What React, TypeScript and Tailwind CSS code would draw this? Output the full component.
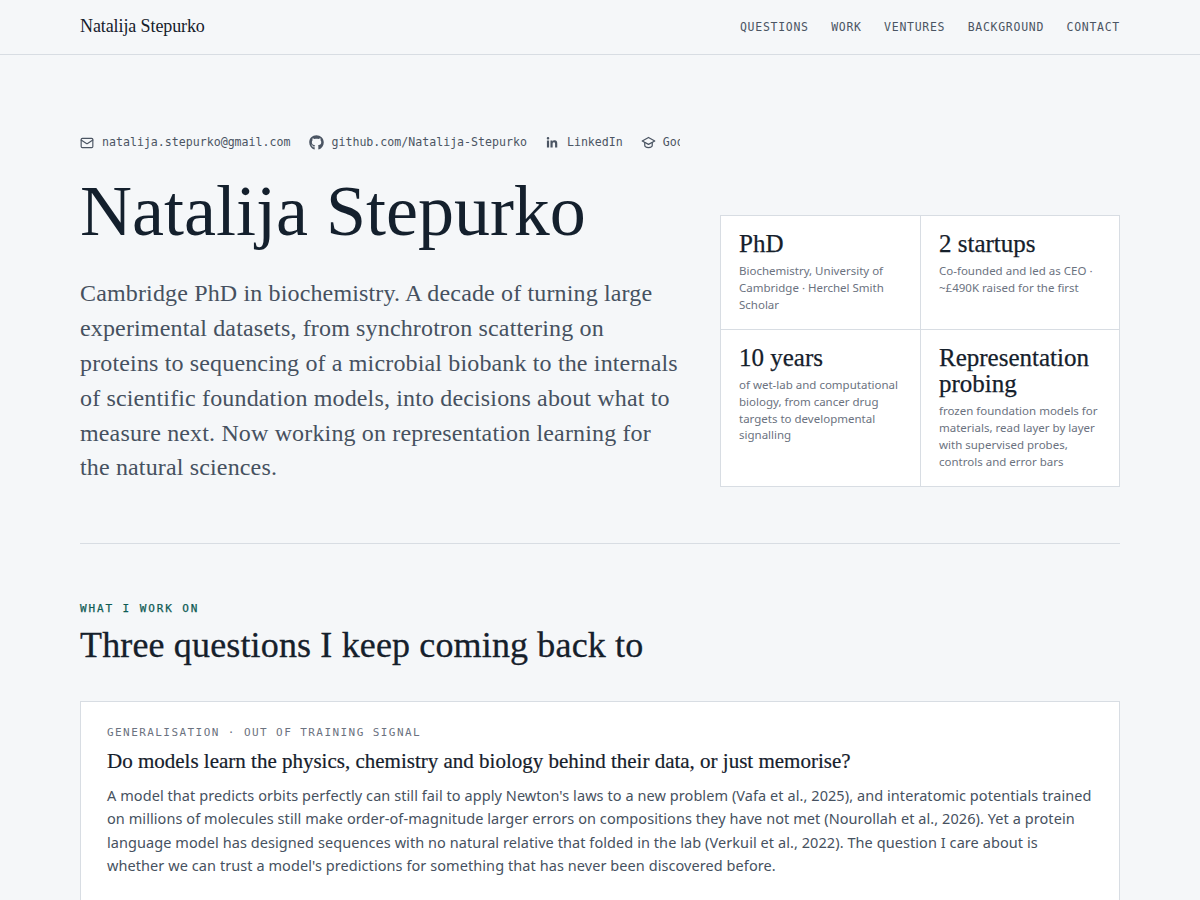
import { Mail } from "lucide-react";
import { FaGithub, FaLinkedinIn } from "react-icons/fa";

const serif = "font-['Liberation_Serif',serif]";
const mono = "font-['DejaVu_Sans_Mono',monospace]";

const navItems = ["QUESTIONS", "WORK", "VENTURES", "BACKGROUND", "CONTACT"];

const stats = [
   { title: "PhD", body: "Biochemistry, University of Cambridge · Herchel Smith Scholar" },
   { title: "2 startups", body: "Co-founded and led as CEO · ~£490K raised for the first" },
   { title: "10 years", body: "of wet-lab and computational biology, from cancer drug targets to developmental signalling" },
   { title: "Representation probing", body: "frozen foundation models for materials, read layer by layer with supervised probes, controls and error bars" },
];

function CapIcon() {
   return (
      <svg viewBox="0 0 24 24" className="size-[15px]" fill="none" stroke="currentColor" strokeWidth="2" strokeLinejoin="round" strokeLinecap="round">
         <path d="M12 4 2 9.5 12 15l10-5.5z" />
         <path d="M6 12v4.5c0 1.8 2.7 3.5 6 3.5s6-1.7 6-3.5V12" />
      </svg>
   );
}

function Stat({ title, body, right, bottom }: { title: string; body: string; right: boolean; bottom: boolean }) {
   return (
      <div className={`px-[18px] pt-[15px] pb-[15.5px] ${right ? "" : "border-r border-[#d8dde3]"} ${bottom ? "" : "border-b border-[#d8dde3]"}`}>
         <h3 className={`${serif} text-[25px] leading-[26.5px] text-[#15202b] [-webkit-text-stroke:0.25px]`}>{title}</h3>
         <p className="mt-[5.5px] text-[11.5px] leading-[16.8px] text-[#6b7280]">{body}</p>
      </div>
   );
}

export default function App() {
   return (
      <div className="min-h-[900px] bg-[#f5f7f9] font-['Noto_Sans',sans-serif]">
         <header className="border-b border-[#d8dde3]">
            <div className="mx-auto flex h-[54px] w-[1040px] items-center justify-between">
               <span className={`${serif} pb-[2px] text-[18px] tracking-[-0.1px] text-[#15202b]`}>Natalija Stepurko</span>
               <nav className={`${mono} flex gap-[22.4px] pt-[2px] text-[11.5px] tracking-[0.72px] text-[#4b5563]`}>
                  {navItems.map((n) => (
                     <a key={n}>{n}</a>
                  ))}
               </nav>
            </div>
         </header>

         <main className="mx-auto w-[1040px]">
            <section className="grid grid-cols-[600px_400px] items-end gap-10 border-b border-[#d8dde3] pt-[79px] pb-[56px]">
               <div className="pb-[2px]">
                  <div className={`${mono} flex gap-[19px] overflow-hidden whitespace-nowrap text-[11.6px] text-[#4b5563]`}>
                     <span className="flex shrink-0 items-center gap-2">
                        <Mail className="size-[14px]" />
                        natalija.stepurko@gmail.com
                     </span>
                     <span className="flex shrink-0 items-center gap-[7px]">
                        <FaGithub className="size-[15px]" />
                        github.com/Natalija-Stepurko
                     </span>
                     <span className="flex shrink-0 items-center gap-[9px]">
                        <FaLinkedinIn className="size-[12px]" />
                        LinkedIn
                     </span>
                     <span className="-ml-px flex shrink-0 items-center gap-[7px]">
                        <CapIcon />
                        Google Scholar
                     </span>
                  </div>
                  <h1 className={`${serif} mt-[17px] text-[72px] leading-[86px] text-[#14202d]`}>Natalija Stepurko</h1>
                  <p className={`${serif} mt-[22px] text-[24px] leading-[34.8px] tracking-[0.15px] text-[#465160]`}>
                     Cambridge PhD in biochemistry. A decade of turning large experimental datasets, from synchrotron scattering on proteins to sequencing of a microbial biobank to the internals of scientific foundation models, into decisions about what to measure next. Now working on representation learning for the natural sciences.
                  </p>
               </div>
               <div className="grid grid-cols-[200px_1fr] border border-[#d8dde3] bg-white">
                  {stats.map((s, i) => (
                     <Stat key={s.title} title={s.title} body={s.body} right={i % 2 === 1} bottom={i > 1} />
                  ))}
               </div>
            </section>

            <section className="pt-[57px]">
               <p className={`${mono} text-[11px] tracking-[1.9px] text-[#0f5c55] [-webkit-text-stroke:0.25px]`}>WHAT I WORK ON</p>
               <h2 className={`${serif} mt-[5px] text-[36px] leading-[44px] tracking-[0.15px] text-[#15202b] [-webkit-text-stroke:0.3px]`}>
                  Three questions I keep coming back to
               </h2>
               <article className="mt-[34px] border border-[#d8dde3] bg-white px-[26px] pt-[23px] pb-8">
                  <p className={`${mono} text-[11px] tracking-[1.43px] text-[#6b7280]`}>GENERALISATION · OUT OF TRAINING SIGNAL</p>
                  <h3 className={`${serif} mt-[7px] text-[21px] leading-[26px] text-[#15202b] [-webkit-text-stroke:0.2px]`}>
                     Do models learn the physics, chemistry and biology behind their data, or just memorise?
                  </h3>
                  <p className="mt-[10px] text-[14.5px] leading-[23.2px] tracking-[0.07px] text-[#465160]">
                     A model that predicts orbits perfectly can still fail to apply Newton's laws to a new problem (Vafa et al., 2025), and interatomic potentials trained on millions of molecules still make order-of-magnitude larger errors on compositions they have not met (Nourollah et al., 2026). Yet a protein language model has designed sequences with no natural relative that folded in the lab (Verkuil et al., 2022). The question I care about is whether we can trust a model's predictions for something that has never been discovered before.
                  </p>
               </article>
            </section>
         </main>
      </div>
   );
}
